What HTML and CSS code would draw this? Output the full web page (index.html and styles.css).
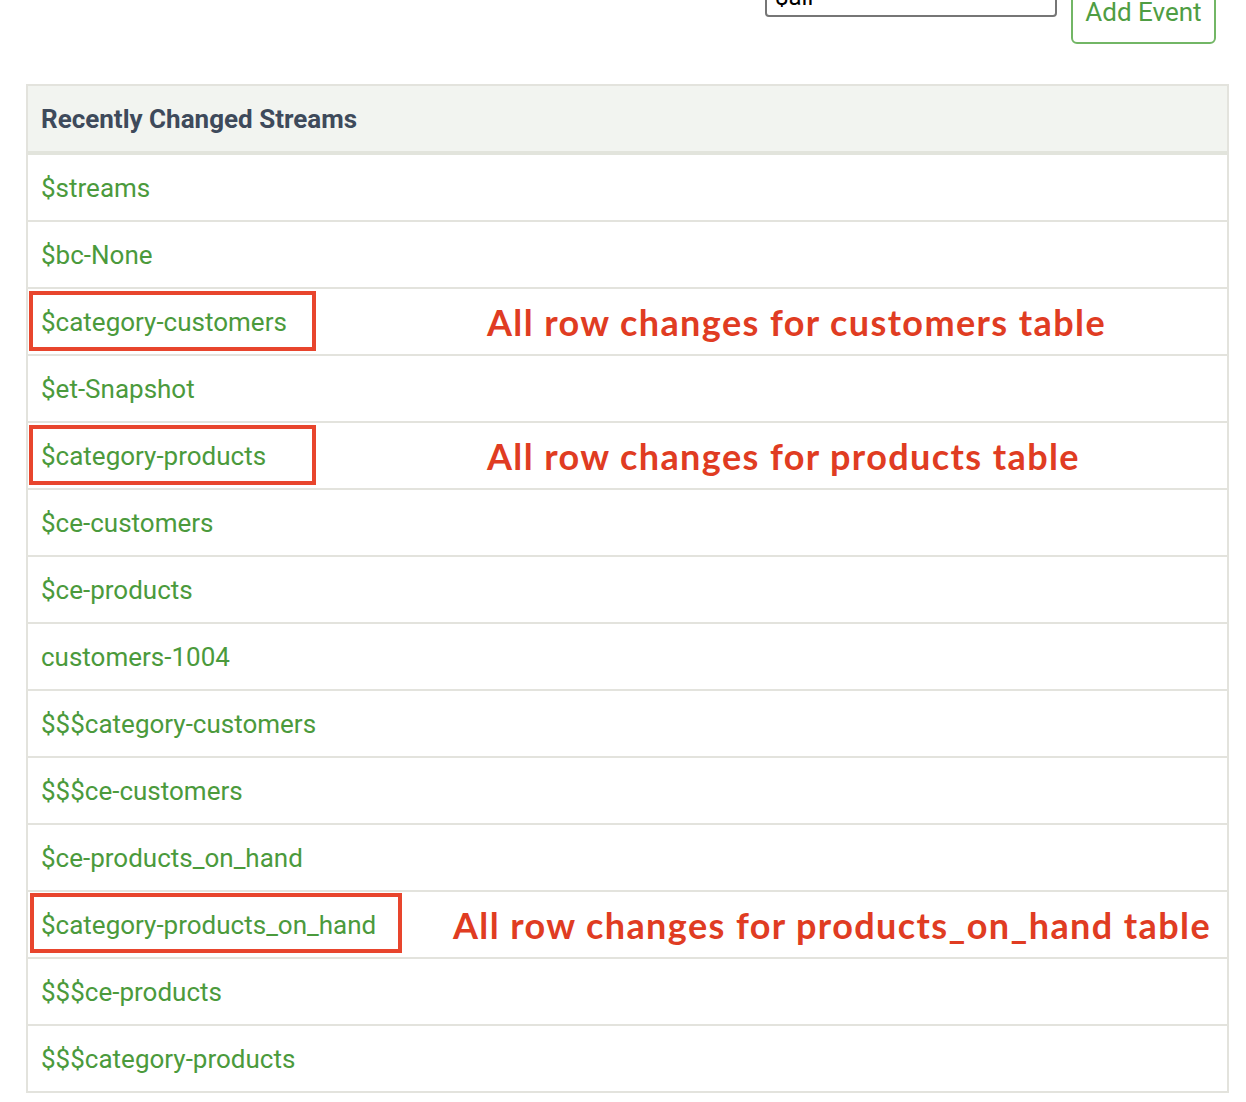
FILE: index.html
```html
<!DOCTYPE html>
<html>
<head>
<meta charset="utf-8">
<link rel="stylesheet" href="styles.css">
</head>
<body>
<div class="toolbar">
  <input class="stream-input" type="text" value="$all">
  <button class="add-btn">Add Event</button>
</div>
<div class="panel">
  <div class="panel-head">Recently Changed Streams</div>
  <div class="row"><a class="link">$streams</a></div>
  <div class="row"><a class="link">$bc-None</a></div>
  <div class="row"><a class="link">$category-customers</a><span class="mark mark-a"></span><span class="note note-a">All row changes for customers table</span></div>
  <div class="row"><a class="link">$et-Snapshot</a></div>
  <div class="row"><a class="link">$category-products</a><span class="mark mark-a"></span><span class="note note-a">All row changes for products table</span></div>
  <div class="row"><a class="link">$ce-customers</a></div>
  <div class="row"><a class="link">$ce-products</a></div>
  <div class="row"><a class="link">customers-1004</a></div>
  <div class="row"><a class="link">$$$category-customers</a></div>
  <div class="row"><a class="link">$$$ce-customers</a></div>
  <div class="row"><a class="link">$ce-products_on_hand</a></div>
  <div class="row"><a class="link">$category-products_on_hand</a><span class="mark mark-b"></span><span class="note note-b">All row changes for products_on_hand table</span></div>
  <div class="row"><a class="link">$$$ce-products</a></div>
  <div class="row"><a class="link">$$$category-products</a></div>
</div>
</body>
</html>
```
FILE: styles.css
```css
html, body {
  margin: 0;
  padding: 0;
  background: #ffffff;
  font-family: Roboto, "Liberation Sans", sans-serif;
}
.toolbar {
  display: flex;
  justify-content: flex-end;
  align-items: flex-start;
  gap: 14px;
  padding-right: 30px;
  margin-top: -16px;
  height: 60px;
}
.stream-input {
  box-sizing: border-box;
  width: 292px;
  height: 40px;
  margin-top: -7px;
  border: 2px solid #767676;
  border-radius: 4px;
  padding: 0 8px;
  font-family: Roboto, "Liberation Sans", sans-serif;
  font-size: 24px;
  color: #000;
  background: #fff;
}
.add-btn {
  box-sizing: border-box;
  width: 145px;
  height: 60px;
  border: 2px solid #72b665;
  border-radius: 6px;
  background: #fff;
  color: #4f9d43;
  font-family: Roboto, "Liberation Sans", sans-serif;
  font-size: 26px;
  padding: 0 0 5px 0;
}
.panel {
  margin: 40px 17px 0 26px;
  border: 2px solid #e3e3dd;
}
.panel-head {
  box-sizing: border-box;
  height: 69px;
  background: #f2f4f0;
  border-bottom: 4px solid #e2e4dc;
  padding: 0 13px;
  display: flex;
  align-items: center;
  font-weight: 700;
  font-size: 26px;
  color: #3e4a5b;
}
.row {
  position: relative;
  box-sizing: border-box;
  height: 67px;
  border-top: 2px solid #e3e3dd;
  padding: 0 13px;
  display: flex;
  align-items: center;
}
.panel-head + .row {
  border-top: none;
  height: 65px;
}
.link {
  font-size: 26px;
  color: #4b9a3c;
  text-decoration: none;
}
.mark {
  position: absolute;
  top: 2px;
  left: 1px;
  height: 60px;
  box-sizing: border-box;
  border: 4px solid #e8452d;
}
.mark-a { width: 287px; }
.mark-b { width: 372px; left: 2px; top: 1px; }
.note {
  position: absolute;
  top: 0;
  bottom: 0;
  display: flex;
  align-items: center;
  font-family: Lato, "Liberation Sans", sans-serif;
  font-weight: 700;
  font-size: 36px;
  letter-spacing: 1.4px;
  color: #e03c22;
  white-space: nowrap;
}
.note-a { left: 459px; }
.note-b { left: 425px; }
```
